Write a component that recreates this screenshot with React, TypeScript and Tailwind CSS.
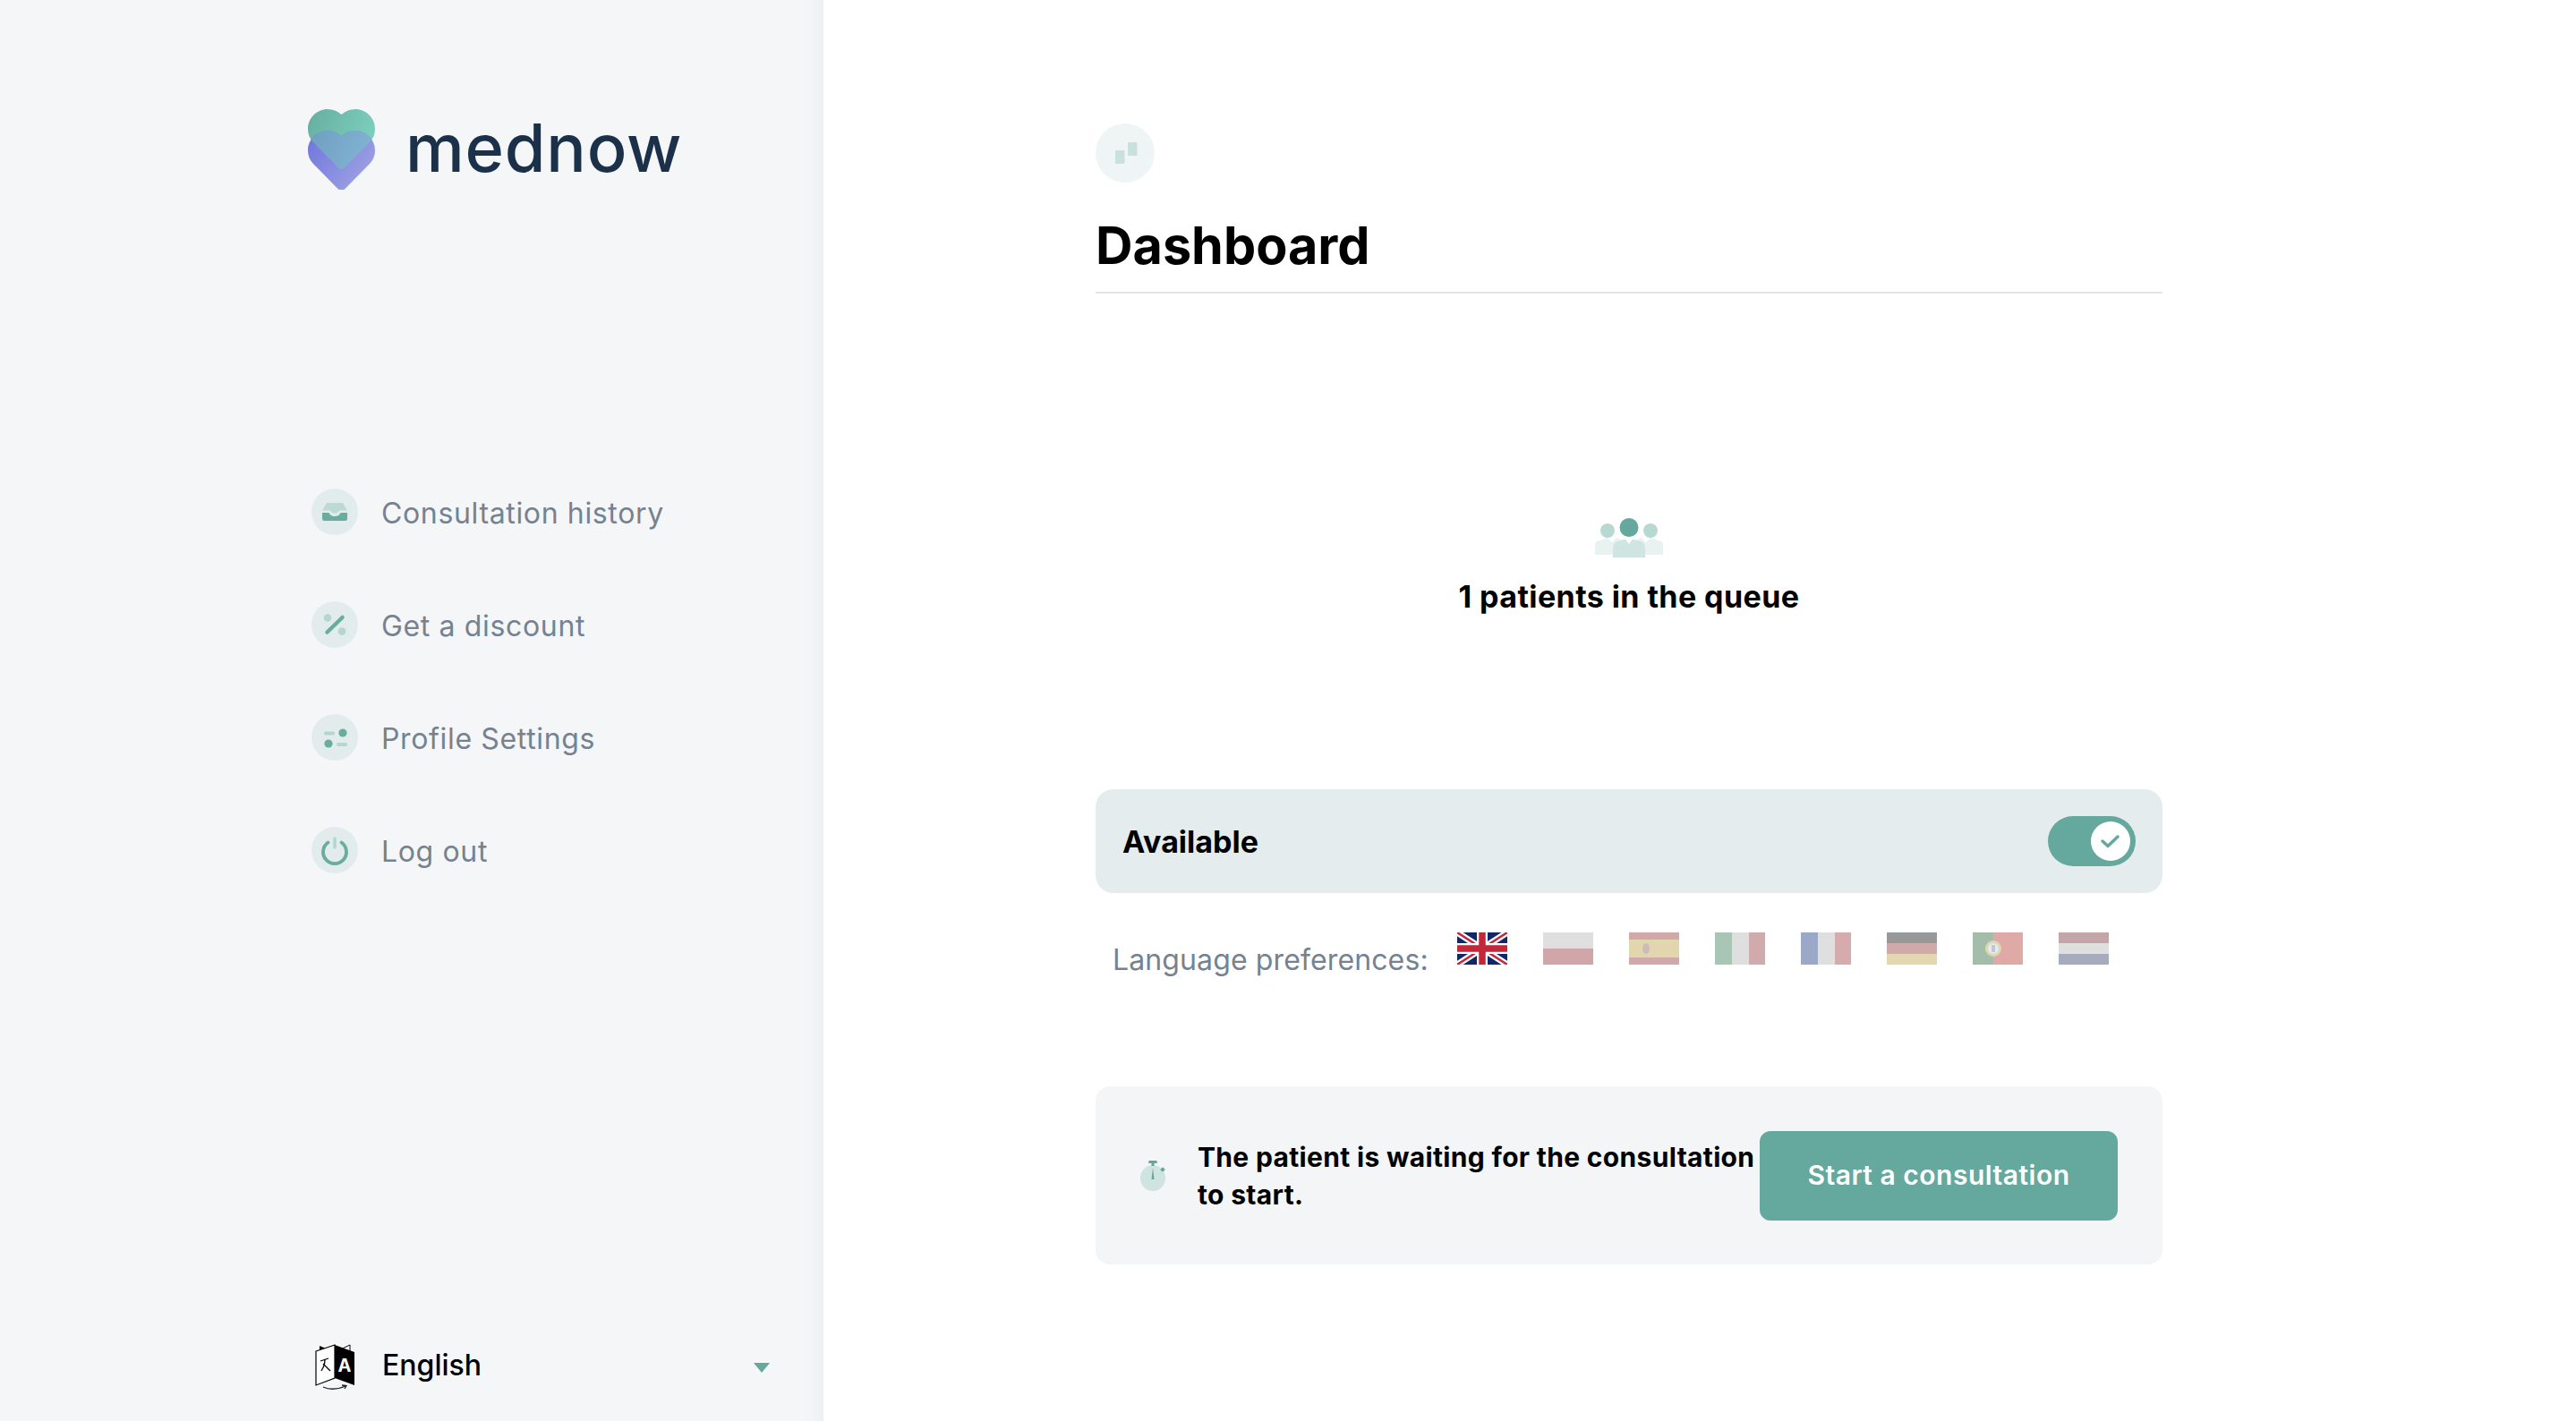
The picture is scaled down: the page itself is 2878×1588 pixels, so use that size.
const font = "font-['Inter','Liberation_Sans',sans-serif]";

function Logo() {
  const heart =
    "M37.5 6C33 2 28 0 22 0C10 0 0 10 0 22C0 28 2 33 6 37L34 65.500Q37.500 68.500 41 65.500L69 37C73 33 75 28 75 22C75 10 65 0 53 0C47 0 42 2 37.500 6Z";
  return (
    <svg width="75" height="90" viewBox="0 0 75 90" className="shrink-0">
      <defs>
        <linearGradient id="g1" x1="0" y1="0" x2="1" y2="0.4">
          <stop offset="0" stopColor="#66ae9f" />
          <stop offset="1" stopColor="#7ccfbd" />
        </linearGradient>
        <linearGradient id="g2" x1="0" y1="0" x2="1" y2="0.7">
          <stop offset="0" stopColor="#6c74da" />
          <stop offset="1" stopColor="#9fa2e4" />
        </linearGradient>
        <linearGradient id="g3" x1="0" y1="0" x2="1" y2="0.4">
          <stop offset="0" stopColor="#6f9fc0" />
          <stop offset="1" stopColor="#84b4d4" />
        </linearGradient>
        <clipPath id="c1">
          <path d={heart} />
        </clipPath>
      </defs>
      <path d={heart} fill="url(#g1)" />
      <path d={heart} fill="url(#g2)" transform="translate(0 24)" />
      <g clipPath="url(#c1)">
        <path d={heart} fill="url(#g3)" transform="translate(0 24)" />
      </g>
    </svg>
  );
}

function NavIcon({ kind }: { kind: string }) {
  const dark = "#68ad9f";
  const light = "#b3d6d0";
  return (
    <span className="flex h-[52px] w-[52px] shrink-0 items-center justify-center rounded-full bg-[#e3ecec]">
      <svg width="52" height="52" viewBox="0 0 52 52">
        {kind === "inbox" && (
          <>
            <path d="M17 16H35L40 24.500H31Q30 27.500 26 27.500Q22 27.500 21 24.500H12Z" fill="#bcd9d5" />
            <path d="M12 27H19.500Q21 31 26 31Q31 31 32.500 27H40V33.500Q40 36 37.500 36H14.500Q12 36 12 33.500Z" fill={dark} />
          </>
        )}
        {kind === "percent" && (
          <>
            <circle cx="18" cy="18.500" r="4.300" fill={light} />
            <circle cx="34" cy="33.500" r="4.300" fill={light} />
            <path d="M17.500 34.500L34.500 18" stroke={dark} strokeWidth="4.500" strokeLinecap="round" />
          </>
        )}
        {kind === "settings" && (
          <>
            <rect x="14" y="19.500" width="12" height="4" rx="2" fill={light} />
            <circle cx="35" cy="21" r="4.600" fill={dark} />
            <circle cx="19" cy="33" r="4.600" fill={dark} />
            <rect x="28" y="32" width="12" height="4" rx="2" fill={light} />
          </>
        )}
        {kind === "power" && (
          <>
            <path d="M18.500 17.500A13 13 0 1 0 33.500 17.500" fill="none" stroke={dark} strokeWidth="3.800" strokeLinecap="round" />
            <path d="M26 13V23" stroke={light} strokeWidth="3.500" strokeLinecap="round" />
          </>
        )}
      </svg>
    </span>
  );
}

function NavItem({ kind, label }: { kind: string; label: string }) {
  return (
    <div className="flex h-[52px] items-center gap-[26px]">
      <NavIcon kind={kind} />
      <span className="whitespace-nowrap pt-[4px] text-[32px] tracking-[0.65px] text-[#748291]">{label}</span>
    </div>
  );
}

function TranslateIcon() {
  return (
    <svg width="46" height="52" viewBox="0 0 46 52" className="shrink-0">
      <path d="M5 2L22 9V35L5 28Z" fill="#000" />
      <path d="M22 9L39 1V28L22 35Z" fill="#fff" stroke="#000" strokeWidth="1" />
      <path d="M1 14L22 7V44L1 52Z" transform="translate(0 -6)" fill="#fff" stroke="#000" strokeWidth="1.200" />
      <path d="M22 7L44 15V52L22 44Z" transform="translate(0 -6)" fill="#000" />
      <text x="33" y="31" textAnchor="middle" fontSize="20" fontWeight="700" fill="#fff" fontFamily="Inter, sans-serif">A</text>
      <path d="M6 19L15 16M11 17Q11 24 7 30M9 22Q13 26 17 30" fill="none" stroke="#000" strokeWidth="1.300" />
      <path d="M9 48Q20 53 34 47" fill="none" stroke="#222" strokeWidth="1.300" />
      <path d="M30 46L35 46.500L33 50" fill="none" stroke="#222" strokeWidth="1.300" />
    </svg>
  );
}

function Flag({ children, muted = true }: { children: React.ReactNode; muted?: boolean }) {
  return (
    <svg width="56" height="36" viewBox="0 0 56 36" className={muted ? "shrink-0 opacity-40" : "shrink-0"}>
      {children}
    </svg>
  );
}

function Flags() {
  return (
    <div className="flex gap-10 pb-[14px]">
      <Flag muted={false}>
        <rect width="56" height="36" fill="#12266b" />
        <path d="M0 0L56 36M56 0L0 36" stroke="#fff" strokeWidth="7" />
        <path d="M0 0L56 36M56 0L0 36" stroke="#c2283a" strokeWidth="2.500" />
        <path d="M28 0V36M0 18H56" stroke="#fff" strokeWidth="12" />
        <path d="M28 0V36M0 18H56" stroke="#c2283a" strokeWidth="7.500" />
      </Flag>
      <Flag>
        <rect width="56" height="18" fill="#b0b0b0" />
        <rect y="18" width="56" height="18" fill="#8e2430" />
      </Flag>
      <Flag>
        <rect width="56" height="36" fill="#8f2b30" />
        <rect y="8" width="56" height="20" fill="#b99a3a" />
        <ellipse cx="19" cy="18" rx="4" ry="6" fill="#7a5a55" />
      </Flag>
      <Flag>
        <rect width="19" height="36" fill="#2a7048" />
        <rect x="19" width="19" height="36" fill="#b0b0b0" />
        <rect x="38" width="18" height="36" fill="#8c2c34" />
      </Flag>
      <Flag>
        <rect width="19" height="36" fill="#0a2874" />
        <rect x="19" width="19" height="36" fill="#b0b0b0" />
        <rect x="38" width="18" height="36" fill="#982f38" />
      </Flag>
      <Flag>
        <rect width="56" height="12" fill="#000" />
        <rect y="12" width="56" height="12" fill="#8e2a2a" />
        <rect y="24" width="56" height="12" fill="#b79c3c" />
      </Flag>
      <Flag>
        <rect width="56" height="36" fill="#b02a22" />
        <rect width="23" height="36" fill="#1e5a2e" />
        <circle cx="23" cy="18" r="9" fill="#a8a040" />
        <circle cx="23" cy="18" r="6" fill="#c8c8d8" />
        <rect x="21" y="14" width="4" height="8" fill="#6078a8" />
      </Flag>
      <Flag>
        <rect width="56" height="12" fill="#6e2228" />
        <rect y="12" width="56" height="12" fill="#b0b0b0" />
        <rect y="24" width="56" height="12" fill="#22305e" />
      </Flag>
    </div>
  );
}

export default function App() {
  return (
    <div className={`flex h-[1588px] w-[2878px] overflow-hidden bg-white ${font}`}>
      <aside className="flex h-full w-[920px] shrink-0 flex-col bg-[#f4f6f8] pl-[344px] pr-[60px] shadow-[inset_-24px_0_24px_-24px_#e6e7ec]">
        <div className="flex items-start gap-[34px] pt-[122px]">
          <Logo />
          <span className="text-[74px] font-medium leading-[86px] tracking-[0.8px] text-[#1b3049]">mednow</span>
        </div>
        <nav className="mt-[334px] flex flex-col gap-[74px] pl-1">
          <NavItem kind="inbox" label="Consultation history" />
          <NavItem kind="percent" label="Get a discount" />
          <NavItem kind="settings" label="Profile Settings" />
          <NavItem kind="power" label="Log out" />
        </nav>
        <div className="mt-auto flex items-center pb-[34px] pl-2">
          <TranslateIcon />
          <span className="mb-[4px] ml-[29px] text-[32px] font-medium text-black">English</span>
          <span className="ml-auto h-0 w-0 border-x-[9px] border-t-[11px] border-x-transparent border-t-[#65a89d]" />
        </div>
      </aside>
      <main className="ml-[304px] w-[1192px] pt-[138px]">
        <div className="flex h-[66px] w-[66px] items-center justify-center rounded-full bg-[#eff5f5]">
          <svg width="66" height="66" viewBox="0 0 66 66">
            <rect x="22" y="30" width="10.500" height="15" rx="1" fill="#c9e0dc" />
            <rect x="36" y="21" width="10.500" height="15" rx="1" fill="#c9e0dc" />
          </svg>
        </div>
        <h1 className="mt-[34px] border-b-2 border-[#e4e4ea] pb-[16px] text-[57.500px] font-bold leading-[72px] text-black">Dashboard</h1>
        <div className="mt-[251px] flex flex-col items-center">
          <svg width="78" height="44" viewBox="0 0 78 44">
            <path d="M1 41V30Q1 26 6 25L15 22L20 27L25 22L34 25Q38 27 38 32V41Z" fill="#e8f2f0" />
            <path d="M40 41V32Q40 27 44 25L53 22L58 27L63 22L72 25Q77 26 77 30V41Z" fill="#e8f2f0" />
            <circle cx="15" cy="14" r="8" fill="#b8d8d2" />
            <circle cx="63" cy="14" r="8" fill="#b8d8d2" />
            <path d="M21 44V33Q21 28 26 26L35 23.500L39 29L43 23.500L52 26Q57 28 57 33V44Z" fill="#cfe5e1" />
            <circle cx="39" cy="10.500" r="10.500" fill="#65a89d" />
          </svg>
          <p className="mt-[22px] text-[34px] font-bold leading-[44px] tracking-[0.42px] text-black">1 patients in the queue</p>
        </div>
        <div className="mt-[193px] flex h-[116px] items-center justify-between rounded-[20px] bg-[#e4eced] px-[30px]">
          <span className="text-[34px] font-bold text-black">Available</span>
          <span className="flex h-[56px] w-[98px] items-center justify-end rounded-full bg-[#65a89d] pr-[6px]">
            <span className="flex h-[44px] w-[44px] items-center justify-center rounded-full bg-white">
              <svg width="24" height="20" viewBox="0 0 24 20">
                <path d="M3 10L9 15.500L20 5" fill="none" stroke="#65a89d" strokeWidth="3.500" strokeLinecap="round" strokeLinejoin="round" />
              </svg>
            </span>
          </span>
        </div>
        <div className="mt-[39px] flex items-center pl-[19px]">
          <span className="w-[385px] shrink-0 whitespace-nowrap pt-[12px] text-[32px] tracking-[0.12px] text-[#748291]">Language preferences:</span>
          <Flags />
        </div>
        <div className="mt-[117px] flex h-[199px] items-center rounded-[16px] bg-[#f4f5f7] pl-[50px] pr-[50px]">
          <svg width="30" height="34" viewBox="0 0 30 34" className="shrink-0">
            <ellipse cx="14" cy="19.500" rx="14" ry="14.500" fill="#cfe3df" />
            <rect x="9" y="0" width="10" height="3" rx="1.500" fill="#65a89d" />
            <rect x="12.500" y="2" width="3" height="4" fill="#65a89d" />
            <path d="M14 8L15.500 21H12.500Z" fill="#65a89d" />
            <rect x="23" y="8" width="4" height="4" transform="rotate(45 25 10)" fill="#65a89d" />
          </svg>
          <p className="ml-[34px] w-[627px] shrink-0 text-[30px] font-bold leading-[42px] tracking-[0.33px] text-black">The patient is waiting for the consultation to start.</p>
          <button className="ml-auto flex h-[100px] w-[400px] items-center justify-center rounded-[12px] bg-[#65a89d] text-[30px] font-semibold tracking-[0.5px] text-white">Start a consultation</button>
        </div>
      </main>
    </div>
  );
}
